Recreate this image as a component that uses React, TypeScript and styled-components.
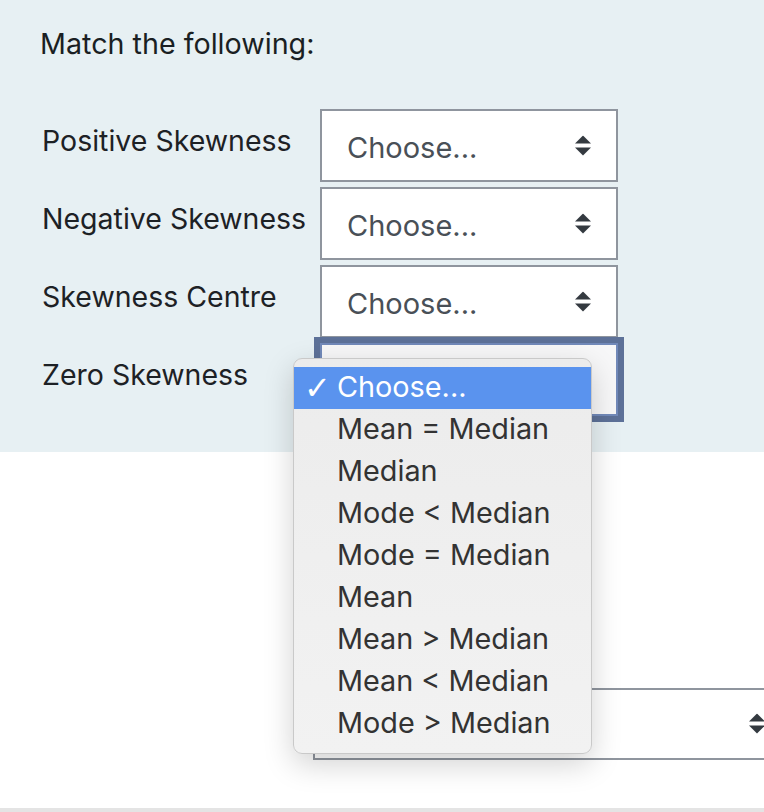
import styled, { createGlobalStyle } from "styled-components";

const GlobalStyle = createGlobalStyle`
  html, body {
    margin: 0;
    padding: 0;
    background: #ffffff;
  }
  body {
    font-family: Inter, "Noto Sans", sans-serif;
    color: #1d2125;
  }
`;

const Page = styled.div`
  width: 764px;
  height: 812px;
  display: flex;
  flex-direction: column;
  overflow: hidden;
`;

const Panel = styled.div`
  background: #e7f0f3;
  padding: 26px 0 0 40px;
  height: 452px;
  box-sizing: border-box;
`;

const Title = styled.div`
  font-size: 28.7px;
  line-height: 36px;
  color: #1a1f23;
`;

const Rows = styled.div`
  margin-top: 47px;
  display: flex;
  flex-direction: column;
  gap: 5px;
`;

const Row = styled.div`
  display: flex;
  align-items: flex-start;
`;

const Label = styled.div`
  width: 280px;
  box-sizing: border-box;
  padding-left: 2px;
  padding-top: 14px;
  font-size: 28.5px;
  line-height: 36px;
`;

const SelectBox = styled.div<{ $focused?: boolean }>`
  position: relative;
  width: 298px;
  height: 73px;
  box-sizing: border-box;
  border: 2px solid ${(p) => (p.$focused ? "#7189b9" : "#8f959e")};
  background: ${(p) => (p.$focused ? "#f7f7f8" : "#ffffff")};
  box-shadow: ${(p) => (p.$focused ? "0 0 0 6px #5d7198" : "none")};
  display: flex;
  align-items: center;
  padding: 4px 0 0 25px;
  font-size: 29px;
  color: #495057;
`;

const Arrows = styled.svg`
  position: absolute;
  right: 25px;
  top: 50%;
  transform: translateY(-50%);
`;

const Menu = styled.div`
  position: absolute;
  left: -29px;
  top: 13px;
  width: 299px;
  padding: 8px 0;
  box-sizing: border-box;
  border-radius: 9px;
  background: linear-gradient(180deg, #ececec 0%, #f2f2f2 100%);
  border: 1px solid #c9c9c9;
  box-shadow: 0 10px 30px rgba(0, 0, 0, 0.18);
  z-index: 5;
`;

const Option = styled.div<{ $active?: boolean }>`
  height: 42px;
  box-sizing: border-box;
  padding: 0 0 3px 43px;
  display: flex;
  align-items: center;
  position: relative;
  font-size: 28.8px;
  color: ${(p) => (p.$active ? "#ffffff" : "#333333")};
  background: ${(p) => (p.$active ? "#5a93ee" : "transparent")};
`;

const Check = styled.span`
  position: absolute;
  left: 10px;
  top: 0;
  bottom: 0;
  display: flex;
  align-items: center;
  font-family: "DejaVu Sans", sans-serif;
  font-size: 32px;
  font-weight: 300;
`;

const Lower = styled.div`
  flex: 1;
  padding-left: 313px;
  padding-top: 236px;
`;

const WideSelect = styled.div`
  position: relative;
  width: 480px;
  height: 72px;
  box-sizing: border-box;
  border: 2px solid #8f959e;
  background: #fff;
`;

const WideArrows = styled(Arrows)`
  right: auto;
  left: 434px;
`;

const Footer = styled.div`
  height: 4px;
  background: #e4e4e4;
`;

const options = [
  "Choose...",
  "Mean = Median",
  "Median",
  "Mode < Median",
  "Mode = Median",
  "Mean",
  "Mean > Median",
  "Mean < Median",
  "Mode > Median",
];

const labels = ["Positive Skewness", "Negative Skewness", "Skewness Centre"];

const App = () => {
  return (
    <Page>
      <GlobalStyle />
      <Panel>
        <Title>Match the following:</Title>
        <Rows>
          {labels.map((l) => (
            <Row key={l}>
              <Label>{l}</Label>
              <SelectBox>
                Choose...
                <Arrows width="16" height="21" viewBox="0 0 16 21">
                  <path d="M8 0 L16 8 L0 8 Z" fill="#343a40" />
                  <path d="M0 12 L16 12 L8 20 Z" fill="#343a40" />
                </Arrows>
              </SelectBox>
            </Row>
          ))}
          <Row>
            <Label>Zero Skewness</Label>
            <SelectBox $focused>
              <Menu>
                {options.map((o, i) => (
                  <Option key={o} $active={i === 0}>
                    {i === 0 && <Check>✓</Check>}
                    {o}
                  </Option>
                ))}
              </Menu>
            </SelectBox>
          </Row>
        </Rows>
      </Panel>
      <Lower>
        <WideSelect>
          <WideArrows width="16" height="21" viewBox="0 0 16 21">
            <path d="M8 0 L16 8 L0 8 Z" fill="#343a40" />
            <path d="M0 12 L16 12 L8 20 Z" fill="#343a40" />
          </WideArrows>
        </WideSelect>
      </Lower>
      <Footer />
    </Page>
  );
};

export default App;
